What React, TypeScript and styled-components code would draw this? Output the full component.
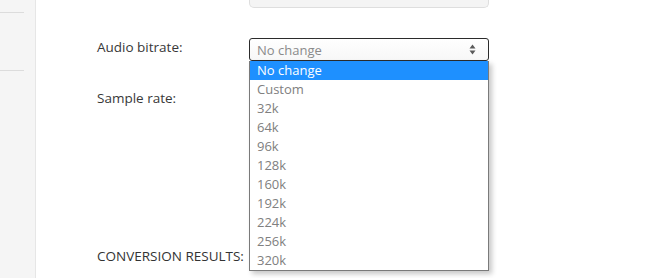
import styled, { createGlobalStyle } from "styled-components";

const GlobalStyle = createGlobalStyle`
  html, body {
    margin: 0;
    padding: 0;
    background: #ffffff;
    overflow: hidden;
  }
  body {
    font-family: "Open Sans", "Liberation Sans", sans-serif;
  }
`;

const Page = styled.div`
  display: flex;
  width: 650px;
  height: 278px;
  overflow: hidden;
`;

const Sidebar = styled.div`
  width: 35px;
  flex-shrink: 0;
  background: #f5f5f5;
  border-right: 1px solid #e6e6e6;
`;

const SideItem = styled.div<{ $h: number }>`
  width: 24px;
  height: ${(p) => p.$h}px;
  border-bottom: 1px solid #dcdcdc;
`;

const Main = styled.div`
  flex: 1;
  padding-left: 61px;
  display: flex;
  flex-direction: column;
`;

const Row = styled.div<{ $mt: number }>`
  display: grid;
  grid-template-columns: 152px 240px;
  align-items: center;
  margin-top: ${(p) => p.$mt}px;
`;

const Label = styled.div`
  font-size: 13.5px;
  color: #383838;
  line-height: 18px;
  margin-top: -5px;
`;

const StubSelect = styled.div`
  grid-column: 2;
  height: 7px;
  background: #f4f4f4;
  border: 1px solid #dedede;
  border-top: none;
  border-radius: 0 0 5px 5px;
`;

const SelectWrap = styled.div`
  position: relative;
`;

const SelectBox = styled.div<{ $active?: boolean }>`
  height: 23px;
  box-sizing: border-box;
  border: 1px solid ${(p) => (p.$active ? "#2b2b2b" : "#dcdcdc")};
  border-radius: 3px;
  background: linear-gradient(#ffffff, #f7f7f7);
  display: flex;
  align-items: center;
  justify-content: space-between;
  padding: 0 12px 0 7px;
  font-size: 13px;
  color: #8a8a8a;
`;

const Arrows = () => (
  <svg width="7" height="11" viewBox="0 0 7 11">
    <path d="M3.5 0.5 L6.5 4.5 L0.5 4.5 Z" fill="#5a5a5a" />
    <path d="M3.5 10.5 L6.5 6.5 L0.5 6.5 Z" fill="#5a5a5a" />
  </svg>
);

const Dropdown = styled.ul`
  position: absolute;
  top: 23px;
  left: 0;
  width: 240px;
  box-sizing: border-box;
  margin: 0;
  padding: 0;
  list-style: none;
  background: #ffffff;
  border: 1px solid #7a7a7a;
  border-top: none;
  box-shadow: 3px 3px 5px rgba(0, 0, 0, 0.22);
  z-index: 2;
`;

const Option = styled.li<{ $selected?: boolean }>`
  height: 19px;
  line-height: 19px;
  padding-left: 7px;
  font-size: 13px;
  color: ${(p) => (p.$selected ? "#ffffff" : "#808080")};
  background: ${(p) => (p.$selected ? "#1e90ff" : "transparent")};
`;

const Results = styled.div`
  margin-top: 135px;
  font-size: 13.5px;
  color: #333333;
  line-height: 18px;
`;

const Divider = styled.div`
  margin-top: 15px;
  border-top: 1px solid #e2e2e2;
`;

const options = [
  "No change",
  "Custom",
  "32k",
  "64k",
  "96k",
  "128k",
  "160k",
  "192k",
  "224k",
  "256k",
  "320k",
];

export default function App() {
  return (
    <>
      <GlobalStyle />
      <Page>
        <Sidebar>
          <SideItem $h={12} />
          <SideItem $h={57} />
        </Sidebar>
        <Main>
          <Row $mt={0}>
            <StubSelect />
          </Row>
          <Row $mt={30}>
            <Label>Audio bitrate:</Label>
            <SelectWrap>
              <SelectBox $active>
                <span>No change</span>
                <Arrows />
              </SelectBox>
              <Dropdown>
                {options.map((o, i) => (
                  <Option key={o} $selected={i === 0}>
                    {o}
                  </Option>
                ))}
              </Dropdown>
            </SelectWrap>
          </Row>
          <Row $mt={28}>
            <Label>Sample rate:</Label>
            <SelectWrap>
              <SelectBox />
            </SelectWrap>
          </Row>
          <Results>CONVERSION RESULTS:</Results>
          <Divider />
        </Main>
      </Page>
    </>
  );
}
